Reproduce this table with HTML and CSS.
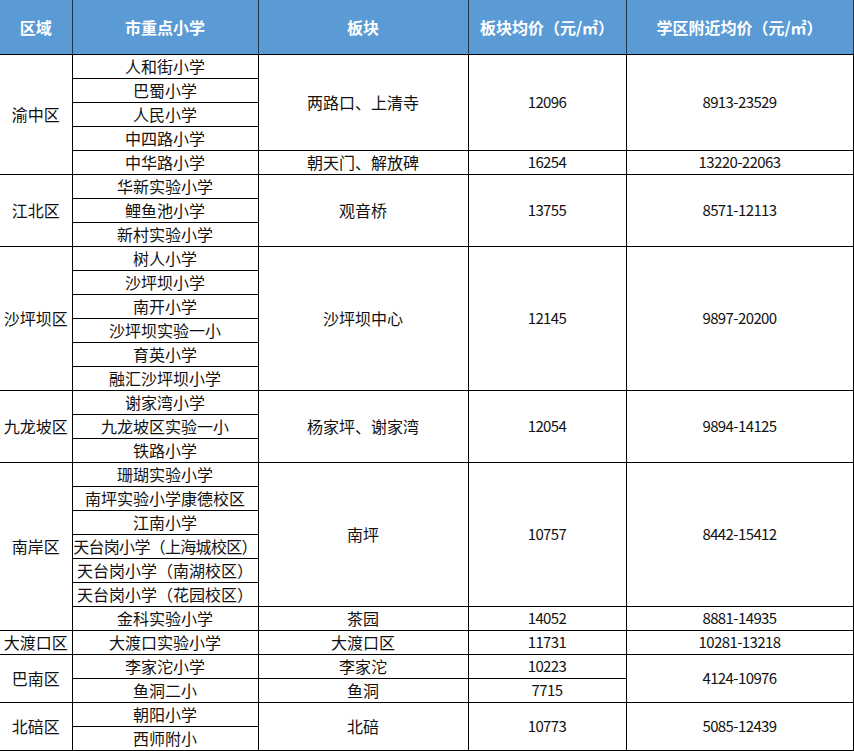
FILE: index.html
```html
<!DOCTYPE html>
<html lang="zh">
<head>
<meta charset="utf-8">
<link rel="stylesheet" href="styles.css">
</head>
<body>
<table class="tbl">
<colgroup>
<col class="c1"><col class="c2"><col class="c3"><col class="c4"><col class="c5">
</colgroup>
<thead>
<tr class="head"><th>区域</th><th>市重点小学</th><th>板块</th><th>板块均价（元/㎡）</th><th>学区附近均价（元/㎡）</th></tr>
</thead>
<tbody>
<tr><td rowspan="5">渝中区</td><td>人和街小学</td><td rowspan="4">两路口、上清寺</td><td rowspan="4" class="num">12096</td><td rowspan="4" class="num">8913-23529</td></tr>
<tr><td>巴蜀小学</td></tr>
<tr><td>人民小学</td></tr>
<tr><td>中四路小学</td></tr>
<tr><td>中华路小学</td><td>朝天门、解放碑</td><td class="num">16254</td><td class="num">13220-22063</td></tr>

<tr><td rowspan="3">江北区</td><td>华新实验小学</td><td rowspan="3">观音桥</td><td rowspan="3" class="num">13755</td><td rowspan="3" class="num">8571-12113</td></tr>
<tr><td>鲤鱼池小学</td></tr>
<tr><td>新村实验小学</td></tr>

<tr><td rowspan="6">沙坪坝区</td><td>树人小学</td><td rowspan="6">沙坪坝中心</td><td rowspan="6" class="num">12145</td><td rowspan="6" class="num">9897-20200</td></tr>
<tr><td>沙坪坝小学</td></tr>
<tr><td>南开小学</td></tr>
<tr><td>沙坪坝实验一小</td></tr>
<tr><td>育英小学</td></tr>
<tr><td>融汇沙坪坝小学</td></tr>

<tr><td rowspan="3">九龙坡区</td><td>谢家湾小学</td><td rowspan="3">杨家坪、谢家湾</td><td rowspan="3" class="num">12054</td><td rowspan="3" class="num">9894-14125</td></tr>
<tr><td>九龙坡区实验一小</td></tr>
<tr><td>铁路小学</td></tr>

<tr><td rowspan="7">南岸区</td><td>珊瑚实验小学</td><td rowspan="6">南坪</td><td rowspan="6" class="num">10757</td><td rowspan="6" class="num">8442-15412</td></tr>
<tr><td>南坪实验小学康德校区</td></tr>
<tr><td>江南小学</td></tr>
<tr><td class="tight">天台岗小学（上海城校区）</td></tr>
<tr><td>天台岗小学（南湖校区）</td></tr>
<tr><td>天台岗小学（花园校区）</td></tr>
<tr><td>金科实验小学</td><td>茶园</td><td class="num">14052</td><td class="num">8881-14935</td></tr>

<tr><td>大渡口区</td><td>大渡口实验小学</td><td>大渡口区</td><td class="num">11731</td><td class="num">10281-13218</td></tr>

<tr><td rowspan="2">巴南区</td><td>李家沱小学</td><td>李家沱</td><td class="num">10223</td><td rowspan="2" class="num">4124-10976</td></tr>
<tr><td>鱼洞二小</td><td>鱼洞</td><td class="num">7715</td></tr>

<tr><td rowspan="2">北碚区</td><td>朝阳小学</td><td rowspan="2">北碚</td><td rowspan="2" class="num">10773</td><td rowspan="2" class="num">5085-12439</td></tr>
<tr><td>西师附小</td></tr>
</tbody>
</table>
</body>
</html>
```
FILE: styles.css
```css
html, body {
  margin: 0;
  padding: 0;
  background: #ffffff;
}
.tbl {
  border-collapse: collapse;
  table-layout: fixed;
  width: 853px;
  font-family: "Noto Sans CJK SC", "Noto Sans", sans-serif;
  font-size: 16px;
  color: #111;
}
.c1 { width: 72px; }
.c2 { width: 186px; }
.c3 { width: 210px; }
.c4 { width: 158px; }
.c5 { width: 227px; }
.tbl th, .tbl td {
  border: 1px solid #000;
  padding: 0;
  text-align: center;
  vertical-align: middle;
  white-space: nowrap;
  overflow: hidden;
  line-height: 22px;
}
.tbl tr > :first-child { border-left: none; }
.tbl thead tr { height: 54px; }
.tbl tbody tr { height: 24px; }
.tbl th {
  background: #5b9bd5;
  color: #ffffff;
  font-weight: bold;
  font-size: 16px;
  border-top: none;
  border-color: #1f3550;
  border-bottom-color: #000;
}
.tbl td.num {
  letter-spacing: -0.6px;
  font-size: 15px;
}
.tbl td.tight {
  letter-spacing: -0.7px;
}
```
